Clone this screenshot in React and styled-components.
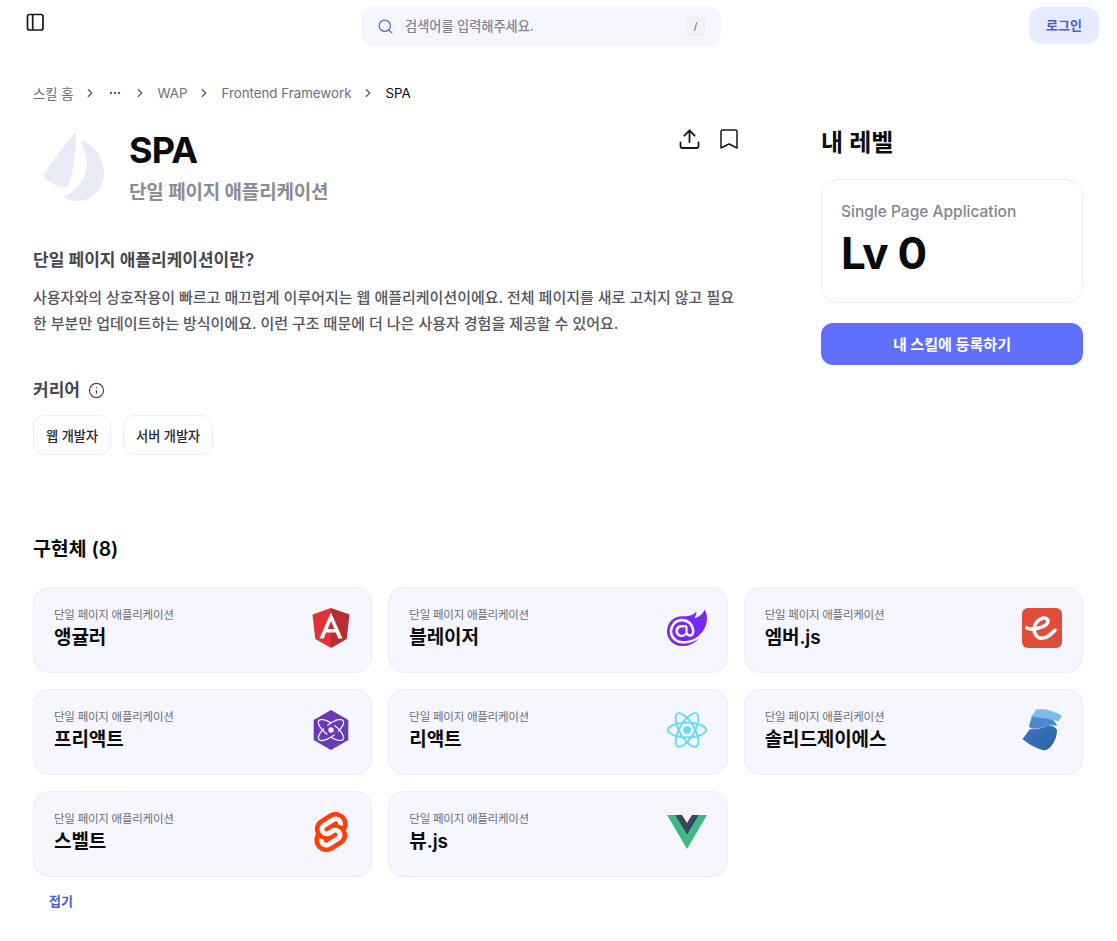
import React from 'react';
import styled, { createGlobalStyle } from 'styled-components';
import { Search, ChevronRight, Ellipsis, Info } from 'lucide-react';
import { SiSvelte, SiReact, SiBlazor, SiPreact } from 'react-icons/si';

const GlobalStyle = createGlobalStyle`
  body {
    margin: 0;
    background: #fff;
    font-family: Inter, 'Noto Sans CJK KR', sans-serif;
    color: #0b0b0d;
  }
`;

const Page = styled.div`
  width: 1117px;
  height: 941px;
  overflow: hidden;
`;

const TopBar = styled.header`
  display: grid;
  grid-template-columns: 335px 360px 1fr;
  padding: 6px 18px 0 26px;
  height: 40px;
`;

const IconButton = styled.button`
  display: flex;
  border: 0;
  padding: 0;
  background: none;
  color: ${(p) => p.$color || '#17171a'};
  align-self: start;
  margin-top: ${(p) => p.$top || 0}px;
`;

const SearchBox = styled.div`
  height: 40px;
  background: #f5f6ff;
  border-radius: 12px;
  display: flex;
  align-items: center;
  padding: 0 16px;
  gap: 11px;
  color: #5566e0;
`;

const SearchText = styled.span`
  flex: 1;
  font-size: 13.2px;
  font-weight: 500;
  color: #85858e;
  padding-bottom: 2px;
`;

const Kbd = styled.span`
  width: 19px;
  height: 19px;
  box-sizing: border-box;
  border: 1px solid #ebebf0;
  background: #f3f3f6;
  border-radius: 3px;
  font-size: 10px;
  color: #55555c;
  display: flex;
  align-items: center;
  justify-content: center;
`;

const LoginButton = styled.button`
  justify-self: end;
  width: 70px;
  height: 37px;
  margin-top: 1px;
  padding: 0 0 2px;
  border: 0;
  border-radius: 12px;
  background: #e6ebff;
  color: #4a5bd8;
  font-family: inherit;
  font-size: 13px;
  font-weight: 700;
`;

const Breadcrumb = styled.nav`
  display: flex;
  align-items: center;
  height: 20px;
  margin: 37px 0 0 33px;
  font-size: 13.3px;
  color: #6e6e76;
`;

const Crumb = styled.span`
  color: ${(p) => (p.$current ? '#0b0b0d' : '#6e6e76')};
`;

const Sep = styled(ChevronRight)`
  margin: 0 10px;
  color: #55555c;
`;

const More = styled(Ellipsis)`
  margin: 0 1px;
  color: #55555c;
`;

const Main = styled.div`
  display: flex;
  padding: 0 34px 0 33px;
  margin-top: 23px;
  height: 389px;
`;

const LeftColumn = styled.section`
  width: 712px;
`;

const RightColumn = styled.aside`
  width: 262px;
  margin-left: 76px;
`;

const Hero = styled.div`
  display: flex;
  height: 80px;
`;

const HeroText = styled.div`
  margin: 2px 0 0 16px;
  flex: 1;
`;

const Title = styled.h1`
  margin: 0;
  font-size: 36px;
  line-height: 44px;
  font-weight: 700;
  letter-spacing: -0.8px;
`;

const Subtitle = styled.p`
  margin: 7px 0 0;
  font-size: 19px;
  line-height: 28px;
  font-weight: 600;
  letter-spacing: -0.2px;
  color: #8b8b94;
`;

const HeroActions = styled.div`
  display: flex;
  gap: 18px;
  margin: 2px 7px 0 0;
  height: 24px;
`;

const SubHeading = styled.h3`
  margin: 0;
  font-size: 17px;
  line-height: 24px;
  font-weight: 600;
  color: #46464d;
`;

const IntroHeading = styled(SubHeading)`
  margin-top: 42px;
`;

const Paragraph = styled.p`
  margin: 13px 0 0;
  font-size: 15px;
  line-height: 26px;
  font-weight: 500;
  color: #55555c;
`;

const CareerHeading = styled(SubHeading)`
  display: flex;
  align-items: center;
  gap: 8px;
  margin-top: 41px;
`;

const Tags = styled.div`
  display: flex;
  gap: 12px;
  margin-top: 13px;
`;

const Tag = styled.div`
  height: 40px;
  box-sizing: border-box;
  padding: 0 12px;
  border: 1px solid #ececf8;
  border-radius: 12px;
  display: flex;
  align-items: center;
  font-size: 13.2px;
  font-weight: 500;
  color: #26262b;
`;

const LevelHeading = styled.h2`
  margin: 0;
  font-size: 24px;
  line-height: 34px;
  font-weight: 600;
`;

const LevelCard = styled.div`
  margin-top: 19px;
  height: 124px;
  box-sizing: border-box;
  border: 1px solid #ececf8;
  border-radius: 16px;
  padding: 21px 19px 0;
`;

const LevelLabel = styled.div`
  font-size: 15.5px;
  line-height: 22px;
  font-weight: 500;
  color: #85858e;
`;

const LevelValue = styled.div`
  font-size: 44px;
  line-height: 56px;
  font-weight: 700;
  letter-spacing: -0.7px;
  margin-top: 2px;
`;

const RegisterButton = styled.button`
  width: 100%;
  height: 42px;
  margin-top: 20px;
  padding: 0 0 3px;
  border: 0;
  border-radius: 12px;
  background: #5f6fff;
  color: #fff;
  font-family: inherit;
  font-size: 15.1px;
  font-weight: 700;
`;

const Implementations = styled.section`
  padding: 0 34px 0 33px;
  margin-top: 20px;
`;

const SectionHeading = styled.h2`
  margin: 0;
  font-size: 19.4px;
  line-height: 28px;
  font-weight: 600;
`;

const Grid = styled.div`
  display: grid;
  grid-template-columns: repeat(3, 1fr);
  grid-auto-rows: 86px;
  gap: 16px;
  margin-top: 24px;
`;

const Card = styled.div`
  box-sizing: border-box;
  background: #f5f6ff;
  border: 1px solid #ececf8;
  border-radius: 16px;
  padding: 0 20px;
  display: flex;
  align-items: center;
  justify-content: space-between;
`;

const CardCaption = styled.div`
  font-size: 11.5px;
  line-height: 16px;
  letter-spacing: -0.25px;
  color: #6e6e76;
  margin-top: -1px;
`;

const CardName = styled.div`
  font-size: 19px;
  line-height: 28px;
  font-weight: 600;
  letter-spacing: -0.1px;
  margin-top: 1px;
`;

const LogoSlot = styled.div`
  display: flex;
  margin-bottom: 4px;
`;

const Collapse = styled.button`
  display: block;
  margin: 7px 0 0 16px;
  border: 0;
  padding: 0;
  background: none;
  font-family: inherit;
  font-size: 13px;
  line-height: 34px;
  font-weight: 700;
  color: #4a5bd8;
`;

const SailLogo = () => (
  <svg width="80" height="80" viewBox="0 0 80 80" fill="#e8ebf7">
    <path d="M41 7.500c1.200-1 2 0 2 1 .5 12-2 36-7 48-1 3-3 5-6 4.500-7-1-16-5-19-10-1-1-.5-2 0-3C18 37 33 18 41 7.500Z" />
    <path d="M48 17c-1-1 0-2 1-2 10 2 21 15 22 30 1 17-12 30-27 30-5 0-10-1-12-3-1-1 0-2 1-2.500C44 65 54 52 54 38c0-8-3-15-6-21Z" />
  </svg>
);

const PanelIcon = () => (
  <svg width="18" height="18" viewBox="0 0 18 18" fill="none" stroke="currentColor" strokeWidth="1.700">
    <rect x="1.500" y="1.500" width="15.500" height="15.500" rx="2" />
    <path d="M6.700 1.500V17" />
  </svg>
);

const UploadIcon = () => (
  <svg width="24" height="24" viewBox="0 0 24 24" fill="none" stroke="currentColor" strokeWidth="1.800" strokeLinecap="round" strokeLinejoin="round">
    <path d="M11.500 14V2.500M6.300 7.700l5.200-5.200 5.200 5.200" />
    <path d="M2.500 14.500V18a2 2 0 0 0 2 2h14a2 2 0 0 0 2-2v-3.500" />
  </svg>
);

const BookmarkIcon = () => (
  <svg width="18" height="22" viewBox="0 0 18 22" fill="none" stroke="currentColor" strokeWidth="1.500" strokeLinejoin="round">
    <path d="M1 3.500A1.500 1.500 0 0 1 2.500 2h13A1.500 1.500 0 0 1 17 3.500V20l-8-4-8 4z" />
  </svg>
);

const AngularLogo = () => (
  <svg width="40" height="40" viewBox="0 0 40 40">
    <path d="M20 0 1.500 6.500 4.300 31 20 40z" fill="#e23237" />
    <path d="M20 0v40l15.700-9L38.500 6.500z" fill="#b52e31" />
    <path d="M20 4.500 8.400 30.400h4.300l2.300-5.800h9.900l2.300 5.800h4.300zm3.400 16.500h-6.800L20 12.900z" fill="#fff" />
  </svg>
);

const EmberLogo = () => (
  <svg width="40" height="40" viewBox="0 0 40 40">
    <rect width="40" height="40" rx="6" fill="#e04e39" />
    <path d="M5 20c3 1.500 6 1.500 9 .8 6-1.500 12-4.300 12-7.500 0-2.300-2.500-3.800-5.500-3-4.500 1.300-8.500 6-8.500 11 0 5 3.500 9 8 9 5 0 9-4 13-8" fill="none" stroke="#fff" strokeWidth="3.600" strokeLinecap="round" strokeLinejoin="round" />
  </svg>
);

const SolidLogo = () => (
  <svg width="40" height="42" viewBox="0 0 40 42">
    <defs>
      <linearGradient id="solidBottom" x1="0" y1="0" x2="1" y2="1">
        <stop offset="0" stopColor="#3f78bf" />
        <stop offset="1" stopColor="#2a5da3" />
      </linearGradient>
    </defs>
    <path d="M10 7 27 9C31 10 34 13 35 17 32 16 29 16 25 17 20 19 14 20 10 19.500 8 19 7 18 7 17Z" fill="#4c88cc" />
    <path d="M14 .5C19-.3 24 .3 28 1.500 32 3 36 4.500 40 6.500L36.500 12.500C33 11 30 10.500 26 10L9.500 7.500Z" fill="#7fb9ea" />
    <path d="M8 20C14 21 20 19 25 17 29 16 33 17 35 21 35 27 33 32 30 36 27 40 24 42 21 41 14 39 6 35 .5 30Z" fill="url(#solidBottom)" />
  </svg>
);

const VueLogo = () => (
  <svg width="40" height="34" viewBox="0 0 40 34">
    <path d="M0 0h8l12 20L32 0h8L20 34z" fill="#41b883" />
    <path d="M8 0h7l5 8 5-8h7L20 20z" fill="#35495e" />
  </svg>
);

const implementations = [
  { name: '앵귤러', logo: <AngularLogo /> },
  { name: '블레이저', logo: <SiBlazor size={40} color="#7a27f5" /> },
  { name: '엠버.js', logo: <EmberLogo /> },
  { name: '프리액트', logo: <SiPreact size={40} color="#673ab8" /> },
  { name: '리액트', logo: <SiReact size={40} color="#61dafb" /> },
  { name: '솔리드제이에스', logo: <SolidLogo /> },
  { name: '스벨트', logo: <SiSvelte size={40} color="#ff3e00" /> },
  { name: '뷰.js', logo: <VueLogo /> },
];

const App = () => (
  <Page>
    <GlobalStyle />
    <TopBar>
      <IconButton $top={7}><PanelIcon /></IconButton>
      <SearchBox>
        <Search size={17} strokeWidth={1.7} />
        <SearchText>검색어를 입력해주세요.</SearchText>
        <Kbd>/</Kbd>
      </SearchBox>
      <LoginButton>로그인</LoginButton>
    </TopBar>

    <Breadcrumb>
      <Crumb>스킬 홈</Crumb>
      <Sep size={14} />
      <More size={14} />
      <Sep size={14} />
      <Crumb>WAP</Crumb>
      <Sep size={14} />
      <Crumb>Frontend Framework</Crumb>
      <Sep size={14} />
      <Crumb $current>SPA</Crumb>
    </Breadcrumb>

    <Main>
      <LeftColumn>
        <Hero>
          <SailLogo />
          <HeroText>
            <Title>SPA</Title>
            <Subtitle>단일 페이지 애플리케이션</Subtitle>
          </HeroText>
          <HeroActions>
            <IconButton><UploadIcon /></IconButton>
            <IconButton><BookmarkIcon /></IconButton>
          </HeroActions>
        </Hero>
        <IntroHeading>단일 페이지 애플리케이션이란?</IntroHeading>
        <Paragraph>
          사용자와의 상호작용이 빠르고 매끄럽게 이루어지는 웹 애플리케이션이에요. 전체 페이지를 새로 고치지 않고 필요한 부분만 업데이트하는 방식이에요. 이런 구조 때문에 더 나은 사용자 경험을 제공할 수 있어요.
        </Paragraph>
        <CareerHeading>
          커리어
          <Info size={17} strokeWidth={1.7} />
        </CareerHeading>
        <Tags>
          <Tag>웹 개발자</Tag>
          <Tag>서버 개발자</Tag>
        </Tags>
      </LeftColumn>
      <RightColumn>
        <LevelHeading>내 레벨</LevelHeading>
        <LevelCard>
          <LevelLabel>Single Page Application</LevelLabel>
          <LevelValue>Lv 0</LevelValue>
        </LevelCard>
        <RegisterButton>내 스킬에 등록하기</RegisterButton>
      </RightColumn>
    </Main>

    <Implementations>
      <SectionHeading>구현체 (8)</SectionHeading>
      <Grid>
        {implementations.map((item) => (
          <Card key={item.name}>
            <div>
              <CardCaption>단일 페이지 애플리케이션</CardCaption>
              <CardName>{item.name}</CardName>
            </div>
            <LogoSlot>{item.logo}</LogoSlot>
          </Card>
        ))}
      </Grid>
      <Collapse>접기</Collapse>
    </Implementations>
  </Page>
);

export default App;
